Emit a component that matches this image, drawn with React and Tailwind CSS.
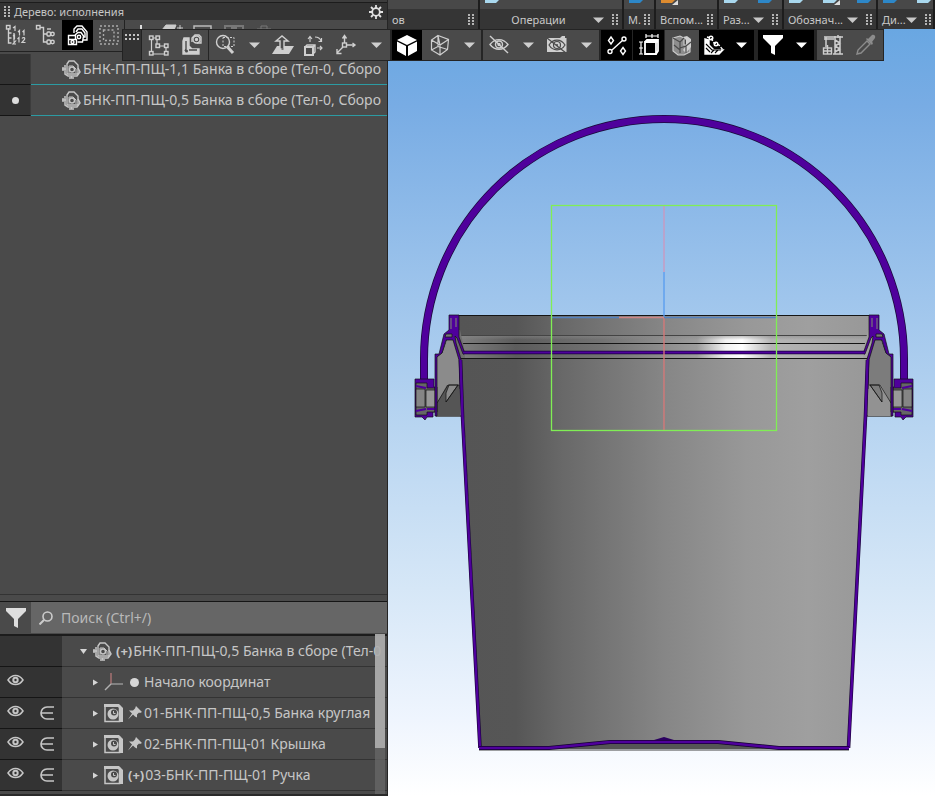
import React from "react";

const line = {
  fill: "none",
  stroke: "currentColor",
  strokeWidth: 1.4,
};

function Glyph({ size = 24, children, className = "" }) {
  return (
    <svg
      width={size}
      height={size}
      viewBox={`0 0 ${size} ${size}`}
      className={`shrink-0 ${className}`}
      aria-hidden="true"
      {...line}
    >
      {children}
    </svg>
  );
}

function Caret() {
  return (
    <svg width="11" height="6" viewBox="0 0 11 6" className="shrink-0" aria-hidden="true">
      <path d="M0 0.5h11L5.5 6z" fill="currentColor" />
    </svg>
  );
}

function Grip() {
  return (
    <svg width="6" height="12" viewBox="0 0 6 12" className="shrink-0" aria-hidden="true">
      {[0, 3, 6, 9].map((y) => (
        <g key={y} fill="#b4b4b4">
          <rect x="0" y={y} width="2" height="2" />
          <rect x="4" y={y} width="2" height="2" />
        </g>
      ))}
    </svg>
  );
}

const icons = {
  numbers: (
    <Glyph>
      <path d="M4.500 5v15h3M4.500 10h3M4.500 15h3M10 10v7" />
      <rect x="2.500" y="2.500" width="3.500" height="3.500" />
      <path d="M9 5l2-1.500v4.500M14 9l1.500-1.500v5M18.500 9l1.500-1.500v5M9 13l1.500-1v4M13.500 16l1.500-1.500v5M18 15.500c1-1.500 3.500-1 2.500 1l-2.500 3h3.500M9 18h2.500l-2.500 3h3" strokeWidth="1.200" />
    </Glyph>
  ),
  hierarchy: (
    <Glyph>
      <rect x="1.500" y="2.500" width="3.500" height="3.500" />
      <path d="M5 4.500h3.500v14.500h3.500M8.500 11h3.500" />
      <rect x="12" y="9" width="3.500" height="4" rx="1" />
      <rect x="12" y="17" width="3.500" height="4" rx="1" />
      <circle cx="17.500" cy="11" r="1.700" />
      <circle cx="17.500" cy="19" r="1.700" />
      <path d="M12 6h4" />
    </Glyph>
  ),
  variants: (
    <Glyph>
      <path d="M8 10V6l3-3h5l5 6v8h-4" />
      <path d="M10 9l2-3h4l3 4v4h-2" />
      <path d="M9 12l3-2.500h3l2.500 3.500-1 6h-5" />
      <circle cx="13" cy="14" r="1.700" />
      <path d="M2.500 12.500h7v4h-7zM2.500 16.500h8v5h-8z" />
      <circle cx="6.500" cy="19" r="1.500" />
    </Glyph>
  ),
  frame: (
    <Glyph>
      <rect x="3" y="3" width="18" height="18" strokeDasharray="2 2" />
      <rect x="6.500" y="7" width="10.500" height="10.500" strokeDasharray="2 2" />
    </Glyph>
  ),
  sketch: (
    <Glyph>
      <path d="M4.500 5v15M5 5h5v8h9v8H5" strokeWidth="1.200" />
      <g fill="#4a4a4a">
        <rect x="2.500" y="3" width="3.500" height="3.500" />
        <rect x="9" y="3" width="3.500" height="3.500" />
        <rect x="9" y="11" width="3.500" height="3.500" />
        <rect x="17.500" y="11" width="3.500" height="3.500" />
        <rect x="2.500" y="18.500" width="3.500" height="3.500" />
        <rect x="17.500" y="18.500" width="3.500" height="3.500" />
      </g>
    </Glyph>
  ),
  bracket: (
    <Glyph>
      <path d="M4 5h5v8l3 3h7v5H3V8z" fill="currentColor" />
      <path d="M6 8v8l-1 2M9 17h8" stroke="#4a4a4a" />
      <circle cx="6.500" cy="18" r="1.500" fill="#4a4a4a" stroke="none" />
      <path d="M12 9V5l3-3h4l2 2v6h-4" />
      <circle cx="16.500" cy="6.500" r="3.500" />
      <circle cx="16.500" cy="6.500" r="1" fill="currentColor" />
    </Glyph>
  ),
  zoomArea: (
    <Glyph>
      <circle cx="9" cy="9" r="6.500" />
      <path d="M13.500 14l5.500 6" strokeWidth="3" />
      <path d="M9 4.500h11v9H9z" strokeDasharray="2 1.500" strokeWidth="1" />
    </Glyph>
  ),
  upPlane: (
    <Glyph>
      <path d="M6 13h17l-5 8H1z" fill="currentColor" stroke="none" />
      <path d="M9 16V8H5l6-5 6 5h-4v8z" fill="#4a4a4a" />
      <path d="M10.500 16h2" stroke="#4a4a4a" />
    </Glyph>
  ),
  rotateBox: (
    <Glyph>
      <path d="M3 14l2-2h8v7l-2 2M11 14l2-2" />
      <path d="M3 14h8v8H3z" strokeWidth="2" />
      <path d="M8 9V4M6 6l2-2.500L10 6" strokeWidth="1.100" />
      <path d="M13 4c3 0 5 1 6 4M19.500 5v3.500h-3M15 15h5M18 13l2 2-2 2" strokeWidth="1.200" />
    </Glyph>
  ),
  axes: (
    <Glyph>
      <path d="M10.500 10V3M8.500 5.500l2-3 2 3M12 12h9M18.500 10l2.500 2-2.500 2M9 14l-6 6M3 16v4.500h4.500" />
      <rect x="8.500" y="10" width="4" height="4" fill="#4a4a4a" />
    </Glyph>
  ),
  cube: (
    <Glyph>
      <path d="M12 2l10 5-10 5L2 7zM2 8.500l9 4.500v10l-9-5zM22 8.500l-9 4.500v10l9-5z" fill="currentColor" stroke="none" />
    </Glyph>
  ),
  wireCube: (
    <Glyph>
      <path d="M10 2.500l10.500 4-1 10L12 22l-8.500-5V7zM3.500 7l8.500 5 8.500-5.500M12 12v10M10 2.500v11L3.500 17M10 13.500l9.500 3M10 2.500L12 12" strokeWidth="1.200" />
    </Glyph>
  ),
  eyeOff: (
    <Glyph>
      <path d="M3 11.500c5-6.500 13-6.500 18 0-5 6.500-13 6.500-18 0z" />
      <circle cx="12" cy="11.500" r="3.500" />
      <circle cx="12" cy="11.500" r="1" fill="currentColor" />
      <path d="M3 3l18 17" />
    </Glyph>
  ),
  cameraOff: (
    <Glyph>
      <path d="M2 5h13l2-2h3v2h1.500v14H2z" fill="currentColor" stroke="none" />
      <path d="M4 12c4-6.500 12-6.500 16 0-4 6.500-12 6.500-16 0z" stroke="#4a4a4a" strokeWidth="1.200" />
      <circle cx="12" cy="12" r="3.500" stroke="#4a4a4a" strokeWidth="1.200" />
      <circle cx="12" cy="12" r="1" fill="#4a4a4a" stroke="none" />
      <path d="M2 5l19 15" stroke="#4a4a4a" strokeWidth="1.200" />
    </Glyph>
  ),
  points: (
    <Glyph>
      <path d="M7 17L18 7" />
      <circle cx="5" cy="18.500" r="2" />
      <circle cx="19" cy="6" r="2" />
      <path d="M6 4l2.500 3.500L6 11 3.500 7.500zM18 14.500l2.500 3.500-2.500 3.500-2.500-3.500z" />
    </Glyph>
  ),
  dimensions: (
    <Glyph>
      <path d="M8 9h11v12H8zM8 9l2-2h11v11l-2 3M19 9l2-2" strokeWidth="1.800" />
      <path d="M9 5V1M21 5V1M9 3h12M6 9H2M6 21H2M4 9v12M15 1v4M2 15h4" strokeWidth="1.200" />
    </Glyph>
  ),
  section: (
    <Glyph>
      <path d="M3 5l7-2 4 2v7h6v7l-6 3H8l-5-4z" fill="currentColor" fillOpacity=".5" strokeWidth="1.100" />
      <path d="M13 4l4-1 4 3v8l-5 6-3-3 3-4V7z" fill="currentColor" stroke="none" />
      <path d="M3 5l7 4v11M10 9l4-4M4 12l6 5M10 15l6-2 5-4M16 13v7" stroke="#4a4a4a" strokeWidth="1.200" />
    </Glyph>
  ),
  hatch: (
    <Glyph>
      <path d="M3 6v15h14l4-4H12L7 12V7z" fill="currentColor" />
      <path d="M4 11l6 6h9M4 15l4 4M12 17l-3 3M16 17l-3 3" stroke="#000" strokeWidth="1.100" />
      <path d="M5 4l4 1 3 5 5 2 4 5" strokeDasharray="3 1.500" />
      <circle cx="9" cy="5" r="1.800" />
      <circle cx="14" cy="11" r="1.800" />
    </Glyph>
  ),
  funnel: (
    <Glyph>
      <path d="M2 2h20v3l-8 8v9l-4-2v-7L2 5z" fill="currentColor" stroke="none" />
    </Glyph>
  ),
  crane: (
    <Glyph>
      <path d="M3 4h19M3 6h10M14 3v18M19 3v18M14 7l5 3-5 3 5 3-5 3M5 4v10M12 21h10M17 2v3" strokeWidth="1.500" />
      <rect x="2.500" y="15" width="8" height="6" />
      <path d="M6.500 12v9M2.500 18h8" />
    </Glyph>
  ),
  dropper: (
    <Glyph>
      <path d="M3 21l1-4 9-9 3 3-9 9z" />
      <path d="M12 6l6 6 1-2-1-1 3-4c1-2-1-4-3-3l-4 4-1-1z" fill="currentColor" stroke="none" />
    </Glyph>
  ),
};

function Assembly() {
  return (
    <Glyph size={20}>
      <path d="M6 5l2-3h5l4 4v9H6z" />
      <path d="M8 14V7h4l3 3v4" strokeWidth="1" />
      <circle cx="11" cy="10.500" r="2.500" />
      <path d="M4 6v9l3 2h9l3-4-2-4M1 10h4M2 8v4M8 19h5M10.500 17v2" strokeWidth="1.500" />
    </Glyph>
  );
}

function Part() {
  return (
    <Glyph size={20}>
      <path d="M0 4V1h15l4 4v14h-3V6l-2-2z" fill="currentColor" stroke="none" />
      <rect x="1" y="3" width="14.500" height="15.500" strokeWidth="1.500" />
      <circle cx="9" cy="11" r="5.500" fill="currentColor" stroke="none" />
      <circle cx="10" cy="9.500" r="3" fill="#4a4a4a" stroke="none" />
      <path d="M9.500 8v2.500h2" strokeWidth="1" />
    </Glyph>
  );
}

function Origin() {
  return (
    <Glyph size={20}>
      <path d="M7 1v11" stroke="#ad7474" />
      <path d="M7 12h12" stroke="#9a9a9a" />
      <path d="M7 12l-6 6" stroke="#b0b0b0" />
    </Glyph>
  );
}

function Pin() {
  return (
    <svg width="14" height="14" viewBox="0 0 14 14" className="shrink-0" aria-label="Зафиксировано">
      <path d="M8 0l6 6-2 1-1-.5-2 2v3l-2-1-2-2-5 5 4-6-3-3h4l2-2z" fill="currentColor" />
    </svg>
  );
}

function Eye() {
  return (
    <svg width="17" height="12" viewBox="0 0 17 12" aria-hidden="true">
      <path d="M1 6c4-6 11-6 15 0-4 6-11 6-15 0z" fill="none" stroke="currentColor" strokeWidth="1.500" />
      <circle cx="8.500" cy="6" r="3.200" fill="currentColor" />
      <circle cx="8.500" cy="6" r="1.200" fill="#333" />
    </svg>
  );
}

function Member() {
  return (
    <svg width="14" height="14" viewBox="0 0 14 14" aria-hidden="true">
      <path d="M14 1H7a6 6 0 0 0 0 12h7M1 7h12" fill="none" stroke="currentColor" strokeWidth="1.700" />
    </svg>
  );
}

function Tool({ icon, label, width, active, dim }) {
  return (
    <button
      type="button"
      aria-label={label}
      aria-pressed={!!active}
      className={`flex h-full shrink-0 items-center justify-center ${width} ${
        active ? "bg-black text-white" : dim ? "text-[#8c8c8c]" : "text-[#cfcfcf]"
      }`}
    >
      {icon ? icons[icon] : <Caret />}
    </button>
  );
}

function Split({ width = "w-px" }) {
  return <span className={`h-full shrink-0 bg-[#252525] ${width}`} />;
}

function ViewToolbar() {
  return (
    <div
      role="toolbar"
      aria-label="Вид"
      className="absolute left-[122px] top-[29px] flex h-8 w-max border-y border-[#242424] bg-[#4a4a4a]"
    >
      <span className="flex h-full w-5 shrink-0 items-start justify-center border-x border-[#222] bg-[#333] pt-1">
        <svg width="14" height="6" viewBox="0 0 14 6" aria-hidden="true">
          {[0, 4, 8, 12].map((x) => (
            <g key={x} fill="#c4c4c4">
              <rect x={x} y="0" width="2" height="2" />
              <rect x={x} y="4" width="2" height="2" />
            </g>
          ))}
        </svg>
      </span>
      <Tool icon="sketch" label="Эскиз" width="w-[33px]" />
      <Tool icon="bracket" label="Деталь" width="w-[33px]" />
      <Split />
      <Tool icon="zoomArea" label="Показать рамкой" width="w-[33px]" />
      <Tool label="Масштаб" width="w-[25px]" />
      <Tool icon="upPlane" label="Нормально к" width="w-[31px]" />
      <Tool icon="rotateBox" label="Повернуть" width="w-[31px]" />
      <Tool icon="axes" label="Ориентация" width="w-[34px]" />
      <Tool label="Список ориентаций" width="w-[27px]" />
      <Split width="w-0.5" />
      <Tool icon="cube" label="Полутоновое" width="w-[30px]" active />
      <Tool icon="wireCube" label="Каркас" width="w-[35px]" />
      <Tool label="Отображение" width="w-6" />
      <Split width="w-0.5" />
      <Tool icon="eyeOff" label="Скрыть" width="w-8" />
      <Tool label="Скрыть типы" width="w-[26px]" />
      <Tool icon="cameraOff" label="Скрыть в окне" width="w-8" />
      <Tool label="Скрыть список" width="w-[26px]" />
      <Split width="w-0.5" />
      <Tool icon="points" label="Точки" width="w-[31px]" active />
      <Split />
      <Tool icon="dimensions" label="Габариты" width="w-[31px]" active />
      <Split />
      <Tool icon="section" label="Сечение модели" width="w-[34px]" />
      <Tool icon="hatch" label="Штриховка" width="w-[29px]" active />
      <Tool label="Параметры сечения" width="w-[26px]" active />
      <Split width="w-1" />
      <Tool icon="funnel" label="Фильтр" width="w-[30px]" active />
      <Tool label="Параметры фильтра" width="w-[26px]" active />
      <Split width="w-[3px]" />
      <Tool icon="crane" label="Сборка" width="w-8" />
      <Tool icon="dropper" label="Пипетка" width="w-[34px]" dim />
      <Split />
    </div>
  );
}

function Group({ label, width, caret, center, children }) {
  return (
    <div className={`flex h-full flex-col border-r-2 border-[#1d1d1d] ${width}`}>
      <div className="flex h-[9px] items-start gap-4 overflow-hidden bg-[#484848] pl-1">{children}</div>
      <div className="flex flex-1 items-center bg-[#353535] pl-1 pr-1 pt-0.5">
        <span className={`flex-1 whitespace-nowrap ${center ? "text-center" : ""}`}>{label}</span>
        {caret && (
          <button type="button" aria-label={`${label} список`} className="mr-2">
            <Caret />
          </button>
        )}
        <Grip />
      </div>
    </div>
  );
}

function Chip({ color = "#a9d8ee", tip }) {
  return (
    <svg width="18" height="5" viewBox="0 0 18 5" className="shrink-0" aria-hidden="true">
      <path d="M1 0h14l-3 3H1z" fill={color} />
      {tip && <path d="M18 0v5h-6z" fill="#ddd" />}
    </svg>
  );
}

function Ribbon() {
  return (
    <header className="flex h-[29px] shrink-0 overflow-hidden bg-[#353535] text-[11px] leading-4 text-[#c8c8c8]">
      <Group label="ов" width="w-[92px] shrink-0" />
      <Group label="Операции" width="w-[144px] shrink-0" caret center>
        <Chip />
      </Group>
      <Group label="М." width="w-8 shrink-0">
        <Chip color="#2d87c8" />
      </Group>
      <Group label="Вспом..." width="w-[63px] shrink-0">
        <Chip color="#dd8b2f" tip />
      </Group>
      <Group label="Раз..." width="w-[65px] shrink-0" caret>
        <Chip />
        <Chip color="#2d87c8" />
      </Group>
      <Group label="Обознач..." width="w-[94px] shrink-0" caret>
        <Chip />
        <Chip tip />
        <Chip color="#2d87c8" />
      </Group>
      <Group label="Ди..." width="min-w-[57px] flex-1" caret>
        <Chip color="#2d87c8" />
        <Chip />
      </Group>
    </header>
  );
}

const configurations = [
  { name: "БНК-ПП-ПЩ-1,1 Банка в сборе (Тел-0, Сборо", current: false },
  { name: "БНК-ПП-ПЩ-0,5 Банка в сборе (Тел-0, Сборо", current: true },
];

const nodes = [
  { name: "БНК-ПП-ПЩ-0,5 Банка в сборе (Тел-0", icon: <Assembly />, plus: true, open: true },
  { name: "Начало координат", icon: <Origin />, dot: true, eye: true },
  { name: "01-БНК-ПП-ПЩ-0,5 Банка круглая", icon: <Part />, pin: true, eye: true, member: true },
  { name: "02-БНК-ПП-ПЩ-01 Крышка", icon: <Part />, pin: true, eye: true, member: true },
  { name: "03-БНК-ПП-ПЩ-01 Ручка", icon: <Part />, plus: true, eye: true, member: true },
];

function TreeRow({ node }) {
  return (
    <li className="flex h-[31px]">
      <span className="flex w-[62px] shrink-0 border-b border-[#151515] bg-[#333]">
        <span className="flex w-[31px] items-center justify-center pb-1">
          {node.eye && (
            <button type="button" aria-label={`Видимость: ${node.name}`}>
              <Eye />
            </button>
          )}
        </span>
        <span className="flex w-[31px] items-center justify-center">{node.member && <Member />}</span>
      </span>
      <span
        className={`flex min-w-0 flex-1 items-center overflow-hidden whitespace-nowrap border-b border-[#333] ${
          node.open ? "pl-[17px]" : "pl-[29px]"
        }`}
      >
        <button type="button" aria-label={`Развернуть ${node.name}`} className="mr-1 flex w-[9px] shrink-0 justify-center">
          <svg width="7" height="7" viewBox="0 0 7 7" aria-hidden="true">
            <path d={node.open ? "M0 1h7L3.500 6z" : "M1 0.500v6L6 3.500z"} fill="#d6d6d6" />
          </svg>
        </button>
        {node.icon}
        {node.plus && <span className="ml-1 text-[13px] font-bold">(+)</span>}
        {node.pin && (
          <span className="ml-1 mr-px flex">
            <Pin />
          </span>
        )}
        {node.dot && <span className="ml-1.5 mr-1 size-[9px] shrink-0 rounded-full bg-[#d6d6d6]" />}
        <span className="pl-px">{node.name}</span>
      </span>
    </li>
  );
}

function TreePanel() {
  return (
    <aside className="flex w-[388px] shrink-0 flex-col border-r border-[#252525] bg-[#4a4a4a] text-[14px] leading-5 text-[#c6c6c6]">
      <div className="h-0.5 shrink-0 bg-[#3c3c3c]" />
      <div className="flex h-[18px] shrink-0 items-center gap-1 border-t border-[#1c1c1c] bg-[#333] pl-1 pr-1">
        <Grip />
        <h2 className="flex-1 text-[11px] leading-4">Дерево: исполнения</h2>
        <button type="button" aria-label="Настройка">
          <svg width="14" height="14" viewBox="0 0 14 14" aria-hidden="true" fill="none" stroke="#e2e2e2">
            <circle cx="7" cy="7" r="3.800" strokeWidth="1.800" />
            <path d="M7 0v3M7 11v3M0 7h3M11 7h3M2 2l2 2M10 10l2 2M12 2l-2 2M4 10l-2 2" strokeWidth="1.800" />
          </svg>
        </button>
      </div>
      <div className="flex h-8 shrink-0 items-start border-b border-[#222]">
        {["numbers", "hierarchy", "variants", "frame"].map((name) => (
          <button
            key={name}
            type="button"
            aria-label={name}
            className={`flex h-[30px] w-[31px] shrink-0 items-center justify-center ${
              name === "variants" ? "bg-black text-white" : name === "frame" ? "text-[#aaa]" : "text-[#cfcfcf]"
            }`}
          >
            {icons[name]}
          </button>
        ))}
        <svg width="150" height="12" viewBox="0 0 150 12" className="shrink-0" aria-hidden="true">
          <path d="M0.500 0v12" stroke="#222" />
          <path d="M17 5v6" stroke="#ddd" strokeWidth="2" />
          <path d="M42 5h10l-2 5H38zM53 8h6M56 5v6" fill="#ccc" stroke="#ccc" />
          <path d="M70 10V6h17v4" fill="none" stroke="#bbb" strokeWidth="1.500" />
          <path d="M101 10V6h18v4M107 8h6" fill="none" stroke="#777" strokeWidth="2" />
          <path d="M133 9h14M137 9V6h6v3" fill="none" stroke="#777" />
        </svg>
      </div>
      <ul aria-label="Исполнения" className="shrink-0 pt-0.5">
        {configurations.map((item) => (
          <li key={item.name} className="flex h-[31px]">
            <span className="flex w-[31px] shrink-0 items-center justify-center border-b border-r border-b-[#151515] border-r-[#3c3c3c] bg-[#333]">
              {item.current && <span className="size-[7px] rounded-full bg-[#ddd]" />}
            </span>
            <span className="flex min-w-0 flex-1 items-center overflow-hidden whitespace-nowrap border-b border-[#2c9ba3] pl-[30px]">
              <Assembly />
              <span className="pl-0.5">{item.name}</span>
            </span>
          </li>
        ))}
      </ul>
      <div className="min-h-0 flex-1 border-b border-[#333]" />
      <div className="h-[7px] shrink-0 border-b border-[#151515]" />
      <div className="flex h-[34px] shrink-0 items-start border-b-2 border-[#1c1c1c]">
        <button type="button" aria-label="Фильтр дерева" className="flex h-8 w-[31px] items-center justify-center text-[#dedede]">
          {icons.funnel}
        </button>
        <label className="flex h-[31px] flex-1 items-center gap-2 bg-[#666] pl-2">
          <svg width="14" height="14" viewBox="0 0 14 14" aria-hidden="true" fill="none" stroke="#ccc">
            <circle cx="8.500" cy="5.500" r="4.500" strokeWidth="1.600" />
            <path d="M5 9l-4.500 4.500" strokeWidth="2" />
          </svg>
          <input
            type="search"
            aria-label="Поиск"
            placeholder="Поиск (Ctrl+/)"
            className="min-w-0 flex-1 bg-transparent outline-none placeholder:text-[#b9b9b9]"
          />
        </label>
      </div>
      <div className="relative shrink-0 border-b-2 border-[#2a2a2a] pb-[3px]">
        <ul aria-label="Дерево модели">
          {nodes.map((node) => (
            <TreeRow key={node.name} node={node} />
          ))}
        </ul>
        <div className="absolute -top-0.5 bottom-0 right-0.5 w-[10px] bg-[#686868]/75">
          <div className="h-[114px] bg-[#c4c4c4]/70" />
        </div>
      </div>
    </aside>
  );
}

/* One half of the rim, ear and handle pivot; the other half is its reflection. */
function RimSide({ ear, earLow, gap }) {
  return (
    <g stroke="#111" strokeWidth=".7">
      <path d="M452 330h8l5 22v6h-4l-7-16z" fill={gap} stroke="none" />
      <path d="M436 416V357l6-4 5-14 6-1 7 20 2 58z" fill={ear} />
      <path d="M437 385h23v31h-23z" fill={earLow} stroke="none" />
      <path d="M437 403V357l6-4 4-13 6-1 6 18v28h-12z" fill={ear} stroke="none" />
      <path d="M448 385h11M437 403l11-18M446 402l12-17M449 385h9l-12 17v-9z" fill={ear} />
      <path d="M436 416.500h25" stroke="#555" />
      <path d="M415 379h19v8h3v25h-4v5h-6l-2 3-3-3h-7z" fill="#4f009c" />
      <path d="M416 383h11v5h8v24h-8v3h-11z" fill="#666" />
      <path d="M416 389h9v18h-9z" fill="#858585" />
      <path d="M426 390h9v17h-9z" fill="#999" />
      <path d="M416 386l10 2M416 411l10-2M427 409h8" stroke="#4f009c" strokeWidth="2" />
      <path
        d="M449 315h10v22l5 14v3h-1l-6-16-2-2 1 7 5 16 1 30h-2l-1-29-6-20-7 0-4 13-5 4v59h-2V354h4l5-20 5-4z"
        fill="#4f009c"
      />
      <path d="M451 318v11M456 318v9" stroke="#777" strokeWidth="1.200" />
      <path d="M446 334h6v3h-7z" fill="#777" />
    </g>
  );
}

function Model() {
  return (
    <svg viewBox="388 29 547 767" className="h-full w-full" role="img" aria-label="Банка в сборе, сечение">
      <defs>
        <linearGradient id="wall" gradientUnits="userSpaceOnUse" x1="458" y1="0" x2="870" y2="0">
          <stop offset="0" stopColor="#555" />
          <stop offset=".14" stopColor="#565656" />
          <stop offset=".25" stopColor="#686868" />
          <stop offset=".5" stopColor="#868686" />
          <stop offset=".7" stopColor="#989898" />
          <stop offset=".85" stopColor="#9f9f9f" />
          <stop offset="1" stopColor="#989898" />
        </linearGradient>
        <linearGradient id="shine" gradientUnits="userSpaceOnUse" x1="458" y1="0" x2="870" y2="0">
          <stop offset="0" stopColor="#808080" />
          <stop offset=".14" stopColor="#5c5c5c" />
          <stop offset=".35" stopColor="#727272" />
          <stop offset=".58" stopColor="#9c9c9c" />
          <stop offset=".65" stopColor="#f2f2f2" />
          <stop offset=".69" stopColor="#fff" />
          <stop offset=".76" stopColor="#b4b4b4" />
          <stop offset="1" stopColor="#a4a4a4" />
        </linearGradient>
        <linearGradient id="fade" x1="0" y1="0" x2="0" y2="1">
          <stop offset="0" stopColor="#888" stopOpacity=".65" />
          <stop offset=".6" stopColor="#888" stopOpacity="0" />
        </linearGradient>
      </defs>

      <path d="M424 381V359a240 240 0 0 1 480 0v22" fill="none" stroke="#1a0a3a" strokeWidth="8" />
      <path d="M424 381V359a240 240 0 0 1 480 0v22" fill="none" stroke="#4f009c" strokeWidth="6.500" />

      <path d="M458 315h412v22l-2 21-20 391H481L461 358l-3-21z" fill="url(#wall)" />
      <path d="M458 335h412l-6 17v6H464v-6z" fill="url(#shine)" />
      <path d="M458 335h412v8H458z" fill="url(#fade)" />
      <g fill="none" stroke="#151515">
        <path d="M450 315.500h428M461 343.500h406M460 358.500h408" />
        <path d="M458 335.500h412" stroke="#444" />
      </g>

      <RimSide ear="#8b8b8b" earLow="#555" gap="#6e6e6e" />
      <g transform="translate(1328 0) scale(-1 1)">
        <RimSide ear="#7c7c7c" earLow="#929292" gap="#a0a0a0" />
      </g>

      <path d="M463 352.500h402" stroke="#15003a" strokeWidth="3.500" />
      <path d="M463 352.500h402" stroke="#4f009c" strokeWidth="2" />

      <path d="M460.500 360l2 56 17.500 332M867.500 360l-2 56-17 332" fill="none" stroke="#160035" strokeWidth="3.600" />
      <path d="M460.500 360l2 56 17.500 332M867.500 360l-2 56-17 332" fill="none" stroke="#4f009c" strokeWidth="2.400" />
      <path d="M545 749l65-6h108l65 6z" fill="#555" />
      <path d="M479 750h370" stroke="#444" strokeWidth="1.200" />
      <path d="M479 748h70l61-6h108l61 6h70" fill="none" stroke="#150030" strokeWidth="4" />
      <path d="M654 740l10-3 10 3z" fill="#2b0060" />
      <path d="M479 748h70l61-6h108l61 6h70" fill="none" stroke="#4f009c" strokeWidth="2.400" />

      <g fill="none" strokeWidth="1.300">
        <path d="M664 205v67" stroke="#cc97bd" />
        <path d="M664 272v45" stroke="#569bf0" />
        <path d="M664 318v112" stroke="#d97878" />
        <path d="M551 317.500h68M664 317.500h113" stroke="#5482c0" />
        <path d="M619 317.500h45" stroke="#ce8585" />
        <rect x="551.500" y="205.500" width="225" height="225" stroke="#80ee55" />
      </g>
    </svg>
  );
}

export default function App() {
  return (
    <div className="h-screen bg-white pb-1 font-['Noto_Sans','Open_Sans',sans-serif]">
      <div className="relative flex h-full overflow-hidden">
        <TreePanel />
        <main className="flex min-w-0 flex-1 flex-col">
          <Ribbon />
          <section className="min-h-0 flex-1 bg-[linear-gradient(to_bottom,#69a7e2_0%,#78ace4_10%,#9fc5ec_35%,#b8d5f1_52%,#d6e7f7_73%,#eff5fe_90%,#ffffff_100%)]">
            <Model />
          </section>
        </main>
        <ViewToolbar />
      </div>
    </div>
  );
}
